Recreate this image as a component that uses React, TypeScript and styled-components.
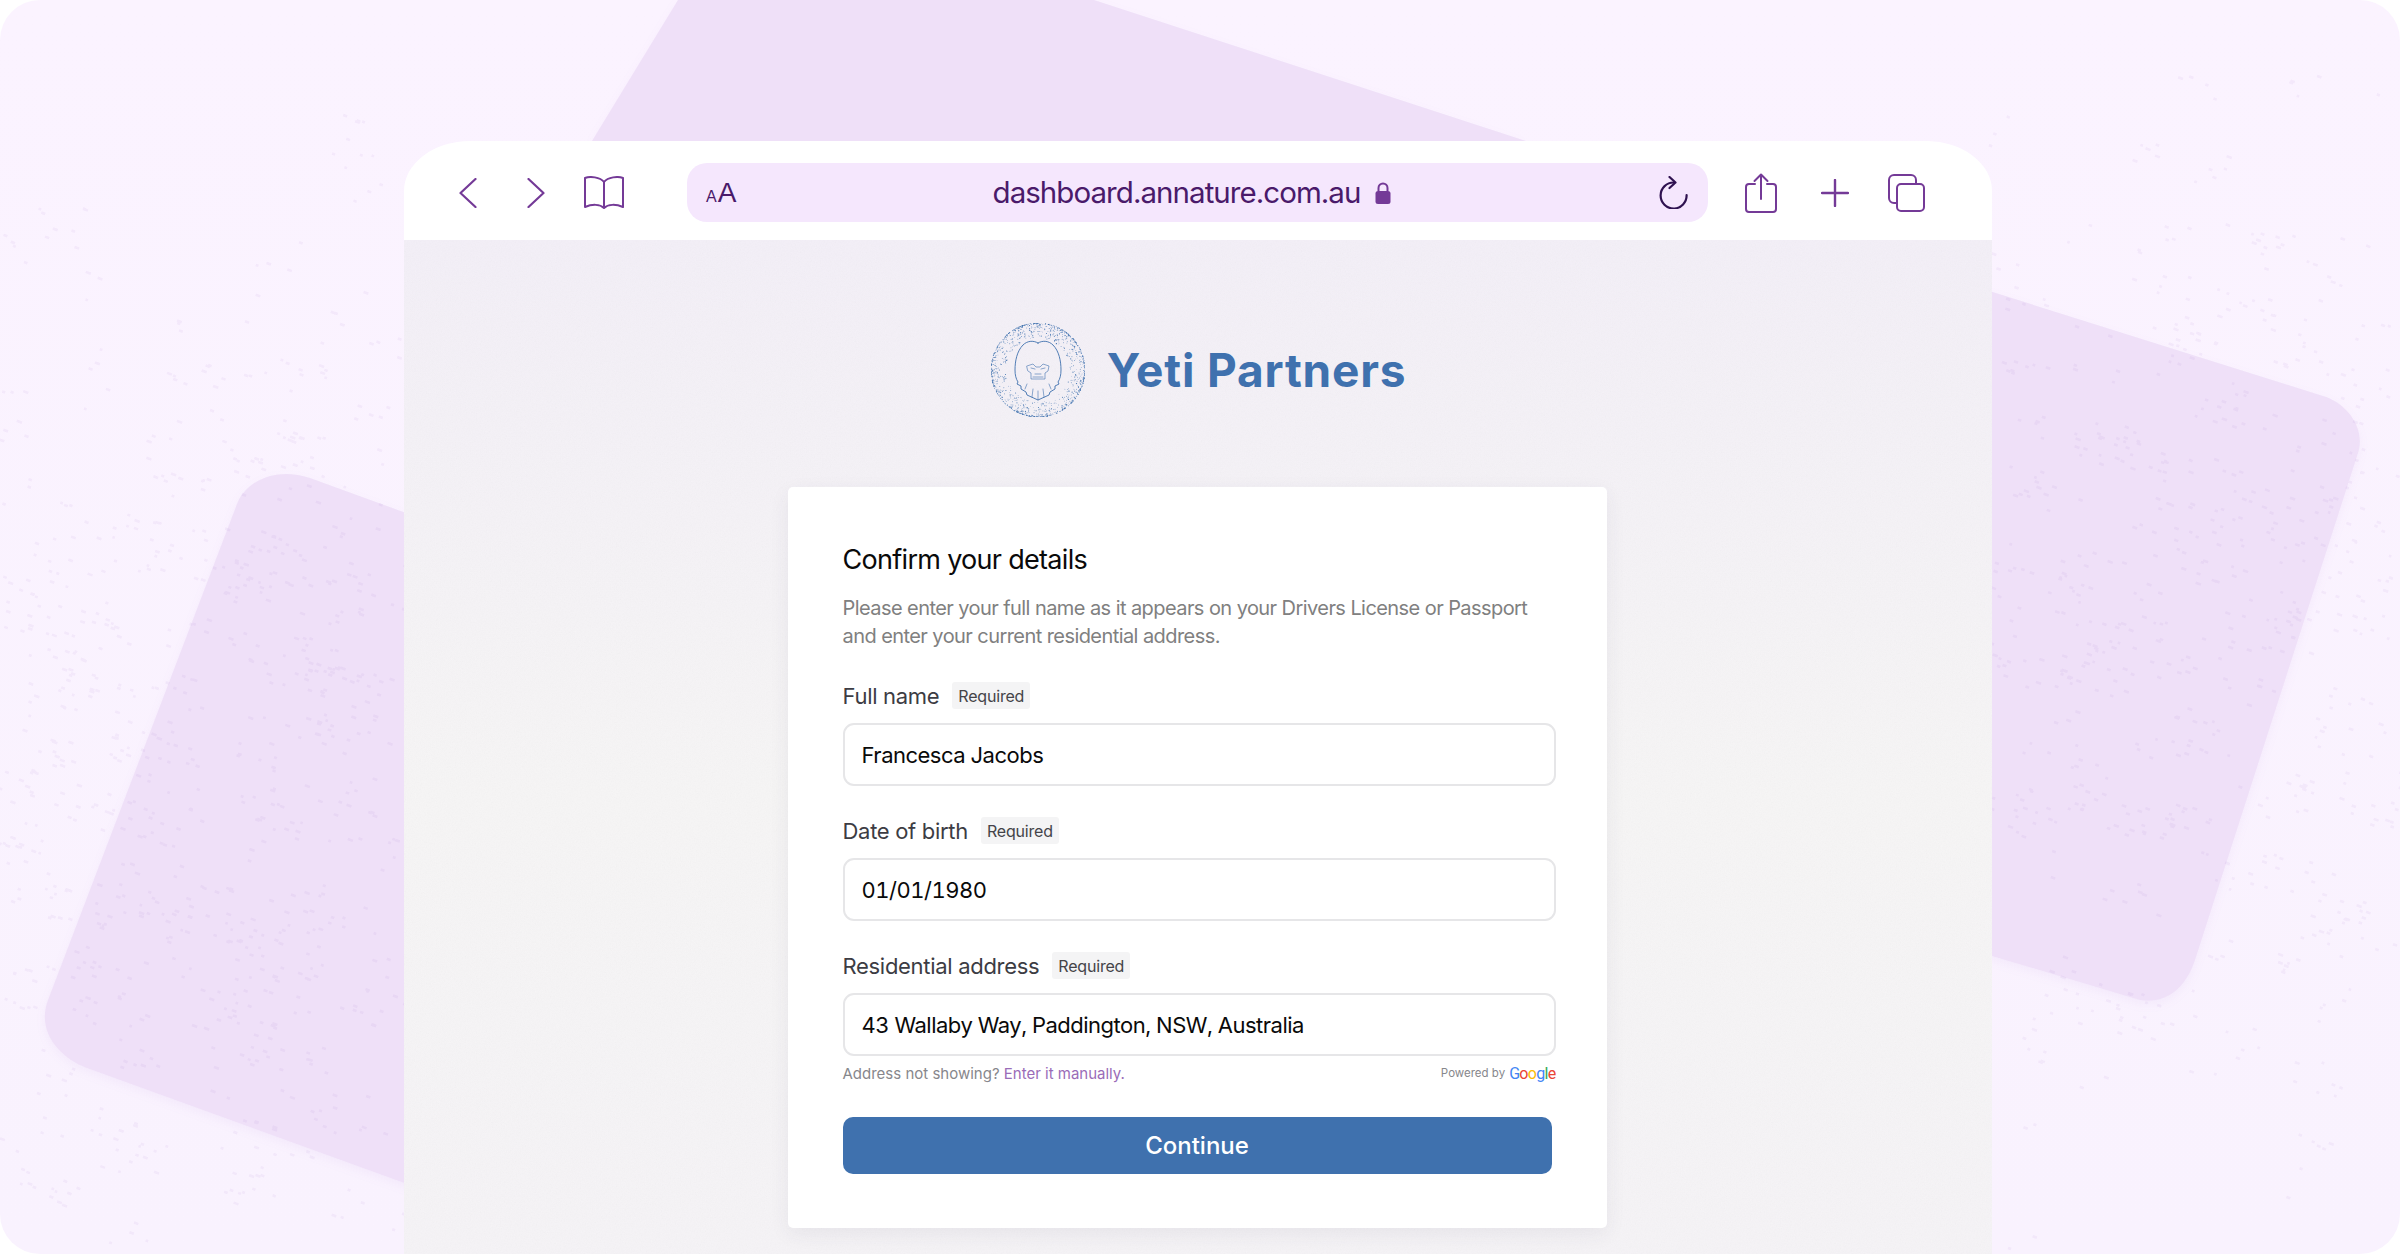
import * as React from 'react';
import styled, { createGlobalStyle } from 'styled-components';

const GlobalStyle = createGlobalStyle`
  html, body {
    margin: 0;
    padding: 0;
    background: #ffffff;
    font-family: "Inter", "Liberation Sans", sans-serif;
  }
  * {
    box-sizing: border-box;
  }
`;

const Page = styled.div`
  position: relative;
  width: 2400px;
  height: 1254px;
  overflow: hidden;
  border-radius: 40px;
  background: linear-gradient(180deg, #fbf3ff 0%, #f9f2fe 100%);
  display: flex;
  flex-direction: column;
  align-items: flex-start;
  padding: 141px 0 0 404px;
`;

const Backdrop = styled.svg`
  position: absolute;
  inset: 0;
`;

const Browser = styled.div`
  position: relative;
  width: 1588px;
  flex: 1;
  display: flex;
  flex-direction: column;
  min-height: 0;
`;

const Toolbar = styled.div`
  height: 99px;
  flex: none;
  padding-top: 4px;
  background: #ffffff;
  border-radius: 66px 66px 0 0 / 50px 50px 0 0;
  display: flex;
  align-items: center;
`;

const IconSlot = styled.div<{ $left: number }>`
  margin-left: ${(p) => p.$left}px;
  display: flex;
  flex: none;
  color: #743a97;
`;

const AddressBar = styled.div`
  margin-left: 63px;
  width: 1021px;
  height: 59px;
  flex: none;
  border-radius: 20px;
  background: #f5e7fd;
  color: #4a1a6a;
  padding: 0 20px 0 19px;
  display: grid;
  grid-template-columns: 1fr auto 1fr;
  align-items: center;
`;

const TextSize = styled.div`
  display: flex;
  align-items: baseline;
  font-family: "Liberation Sans", sans-serif;
  line-height: 1;
  span:first-child {
    font-size: 16px;
    margin-right: 1px;
  }
  span:last-child {
    font-size: 28px;
  }
`;

const Url = styled.div`
  display: flex;
  align-items: center;
  gap: 15px;
  margin-right: 10px;
  font-size: 29.5px;
  letter-spacing: -0.95px;
  line-height: 1;
`;

const Reload = styled.div`
  display: flex;
  justify-content: flex-end;
  color: #2f1250;
`;

const Panel = styled.div`
  position: relative;
  flex: 1;
  min-height: 0;
  overflow: hidden;
  background: linear-gradient(180deg, #f3eff7 0%, #f6f5f5 55%, #f5f3f6 100%);
  display: flex;
  flex-direction: column;
  align-items: center;
  padding: 83px 2px 0 0;
`;

const Noise = styled.svg`
  position: absolute;
  inset: 0;
  opacity: 0.05;
`;

const Brand = styled.div`
  position: relative;
  display: flex;
  align-items: center;
  gap: 22px;
  flex: none;
  margin-left: 3px;
`;

const BrandName = styled.div`
  font-family: "Inter", sans-serif;
  font-weight: 700;
  font-size: 46px;
  letter-spacing: 0.8px;
  line-height: 1;
  color: #3f71ae;
`;

const Card = styled.div`
  position: relative;
  flex: none;
  width: 819px;
  height: 741px;
  margin-top: 70px;
  padding: 55px;
  background: #ffffff;
  border-radius: 5px;
  box-shadow: 0 6px 20px rgba(60, 50, 80, 0.07);
  display: flex;
  flex-direction: column;
`;

const Title = styled.div`
  font-size: 27px;
  line-height: 36px;
  letter-spacing: -0.7px;
  color: #0a0a0a;
`;

const Description = styled.div`
  margin: 16px 0 1px;
  font-size: 20px;
  line-height: 28px;
  letter-spacing: -0.57px;
  white-space: nowrap;
  color: #808080;
`;

const Field = styled.div`
  margin-top: 31px;
`;

const LabelRow = styled.div`
  display: flex;
  align-items: center;
  gap: 13px;
  height: 27px;
`;

const Label = styled.div`
  font-size: 22px;
  letter-spacing: -0.3px;
  color: #3c3c43;
`;

const Badge = styled.div`
  height: 27px;
  padding: 0 6px;
  display: flex;
  align-items: center;
  border-radius: 3px;
  background: #f4f4f5;
  font-size: 16px;
  letter-spacing: -0.2px;
  color: #444449;
`;

const InputBox = styled.div`
  margin-top: 14px;
  width: calc(100% + 4px);
  height: 63px;
  padding: 0 17px;
  display: flex;
  align-items: center;
  border: 2px solid #e6e6e8;
  border-radius: 11px;
  background: #ffffff;
  font-size: 22px;
  letter-spacing: -0.5px;
  font-feature-settings: 'tnum';
  color: #0a0a0a;
`;

const HintRow = styled.div`
  margin-top: 6px;
  width: calc(100% + 4px);
  display: flex;
  justify-content: space-between;
  align-items: center;
  height: 22px;
  flex: none;
`;

const Hint = styled.div`
  font-size: 15px;
  color: #87878c;
  a {
    color: #9a6cb8;
    text-decoration: none;
  }
`;

const Powered = styled.div`
  display: flex;
  align-items: center;
  gap: 4px;
  font-size: 11.5px;
  color: #87878c;
`;

const GoogleMark = styled.span`
  font-family: "Roboto", "Open Sans", sans-serif;
  font-size: 16px;
  letter-spacing: -0.7px;
`;

const Letter = styled.span<{ $color: string }>`
  color: ${(p) => p.$color};
`;

const ContinueButton = styled.button`
  margin-top: 33px;
  height: 57px;
  flex: none;
  border: none;
  border-radius: 10px;
  background: #3f71ae;
  color: #ffffff;
  font-family: "Inter", sans-serif;
  font-size: 24px;
  font-weight: 500;
`;

const seeded = (seed: number) => {
  let s = seed;
  return () => {
    s = (s * 16807) % 2147483647;
    return (s - 1) / 2147483646;
  };
};

const speckles = (() => {
  const rand = seeded(4711);
  const out: { x: number; y: number; w: number }[] = [];
  for (let i = 0; i < 900; i++) {
    const right = rand() > 0.52;
    const cx = right ? 1992 + rand() * 408 : rand() * 404;
    const cy = rand() * 1254;
    // denser around the vertical middle, fades out to the top and bottom
    const centre = right ? 620 : 760;
    if (rand() > Math.exp(-Math.pow((cy - centre) / 360, 2))) continue;
    // little clumps of dots
    const n = 2 + Math.floor(rand() * 4);
    for (let j = 0; j < n; j++) {
      out.push({ x: cx + (rand() - 0.5) * 50, y: cy + (rand() - 0.5) * 34, w: 2.5 + rand() * 3 });
    }
  }
  return out;
})();

const logoDots = (() => {
  const rand = seeded(2024);
  const out: { x: number; y: number; r: number }[] = [];
  for (let i = 0; i < 1200; i++) {
    const a = rand() * Math.PI * 2;
    const d = 47 - Math.pow(rand(), 3) * 15;
    out.push({ x: 47 + Math.cos(a) * d, y: 47 + Math.sin(a) * d, r: 0.25 + rand() * 0.3 });
  }
  return out;
})();

const fields = [
  { label: 'Full name', value: 'Francesca Jacobs' },
  { label: 'Date of birth', value: '01/01/1980' },
  { label: 'Residential address', value: '43 Wallaby Way, Paddington, NSW, Australia' },
];

const LogoMark = () => (
  <svg width="94" height="94" viewBox="0 0 94 94" fill="none">
    <g fill="#3f71ae">
      {logoDots.map((d, i) => (
        <circle key={i} cx={d.x} cy={d.y} r={d.r} />
      ))}
    </g>
    <g stroke="#3f71ae" strokeWidth="0.9" strokeLinejoin="round" strokeLinecap="round">
      <path d="M47 20C42 17 36 18 32 22C26 28 24 38 24 47C24 52 25 56 27 59L26 61L30 63L30 66L35 69L36 72L47 77L58 72L59 69L64 66L64 63L68 61L67 59C69 56 70 52 70 47C70 38 68 28 62 22C58 18 52 17 47 20Z" />
      <path strokeWidth="0.6" d="M36 43L42 41L45 44H49L52 41L58 43L57 48L54 50V56H40V50L37 48Z" />
      <path strokeWidth="0.6" d="M40 45L44 46M54 45L50 46M44 51H50M42 54H52" />
      <path strokeWidth="0.6" d="M47 77V68M41 74L42 66M53 74L52 66M34 66L36 61M60 66L58 61" />
    </g>
  </svg>
);

const BackIcon = () => (
  <svg width="18" height="30" viewBox="0 0 18 30" fill="none" stroke="currentColor" strokeWidth="2.2" strokeLinecap="round" strokeLinejoin="round">
    <path d="M16.5 1L1.5 15L16.5 29" />
  </svg>
);

const ForwardIcon = () => (
  <svg width="18" height="30" viewBox="0 0 18 30" fill="none" stroke="currentColor" strokeWidth="2.2" strokeLinecap="round" strokeLinejoin="round">
    <path d="M1.5 1L16.5 15L1.5 29" />
  </svg>
);

const BookIcon = () => (
  <svg width="40" height="33" viewBox="0 0 40 33" fill="none" stroke="currentColor" strokeWidth="2" strokeLinejoin="round">
    <path d="M20 6C16 1 6 0 1 2V31C8 28 16 28 20 32C24 28 32 28 39 31V2C34 0 24 1 20 6Z" />
    <path d="M20 6V32" />
  </svg>
);

const LockIcon = () => (
  <svg width="16" height="22" viewBox="0 0 16 22" fill="none">
    <rect x="0.5" y="9" width="15" height="13" rx="2.5" fill="#743a97" />
    <path d="M3.5 9V6A4.5 4.5 0 0 1 12.5 6V9" stroke="#743a97" strokeWidth="2" />
  </svg>
);

const ReloadIcon = () => (
  <svg width="29" height="33" viewBox="0 0 29 33" fill="none" stroke="currentColor" strokeWidth="2.2" strokeLinecap="round" strokeLinejoin="round">
    <path d="M15 6.5A13 13 0 1 0 27.6 19" />
    <path d="M10.5 1L16.5 6.5L10.5 12" />
  </svg>
);

const ShareIcon = () => (
  <svg width="32" height="40" viewBox="0 0 32 40" fill="none" stroke="currentColor" strokeWidth="2" strokeLinecap="round" strokeLinejoin="round">
    <path d="M10 11H4A3 3 0 0 0 1 14V36A3 3 0 0 0 4 39H28A3 3 0 0 0 31 36V14A3 3 0 0 0 28 11H22" />
    <path d="M16 1.5V26M9.5 8L16 1.5L22.5 8" />
  </svg>
);

const PlusIcon = () => (
  <svg width="28" height="28" viewBox="0 0 28 28" fill="none" stroke="currentColor" strokeWidth="2.4" strokeLinecap="round">
    <path d="M14 1V27M1 14H27" />
  </svg>
);

const TabsIcon = () => (
  <svg width="37" height="38" viewBox="0 0 37 38" fill="none" stroke="currentColor" strokeWidth="2" strokeLinejoin="round">
    <rect x="9" y="10" width="27" height="27" rx="4" />
    <path d="M9 29H6A5 5 0 0 1 1 24V6A5 5 0 0 1 6 1H23A5 5 0 0 1 28 6V10" />
  </svg>
);

const App: React.FC = () => {
  return (
    <Page>
      <GlobalStyle />
      <Backdrop width="2400" height="1254" viewBox="0 0 2400 1254">
        <g fill="#efe0f8" style={{ filter: 'drop-shadow(0 4px 5px rgba(140, 80, 190, 0.05))' }}>
          <path d="M592 141L678 0H1094L1526 141Z" />
          <path d="M237 504C245 482 275 466 310 478L700 620V1290L87 1068C60 1058 36 1032 48 1000Z" />
          <path d="M1700 200L2323 396C2345 402 2368 428 2357 456L2195 960C2185 990 2165 1004 2140 1000L1700 869Z" />
        </g>
        <g fill="#8c50be" opacity="0.06">
          {speckles.map((s, i) => (
            <rect key={i} x={s.x} y={s.y} width={s.w} height="2.6" transform={`rotate(20 ${s.x} ${s.y})`} />
          ))}
        </g>
      </Backdrop>
      <Browser>
        <Toolbar>
          <IconSlot $left={55}><BackIcon /></IconSlot>
          <IconSlot $left={50}><ForwardIcon /></IconSlot>
          <IconSlot $left={39}><BookIcon /></IconSlot>
          <AddressBar>
            <TextSize>
              <span>A</span>
              <span>A</span>
            </TextSize>
            <Url>
              dashboard.annature.com.au
              <LockIcon />
            </Url>
            <Reload><ReloadIcon /></Reload>
          </AddressBar>
          <IconSlot $left={37}><ShareIcon /></IconSlot>
          <IconSlot $left={44}><PlusIcon /></IconSlot>
          <IconSlot $left={39}><TabsIcon /></IconSlot>
        </Toolbar>
        <Panel>
          <Noise width="100%" height="100%">
            <filter id="grain">
              <feTurbulence type="fractalNoise" baseFrequency="0.8" numOctaves="2" stitchTiles="stitch" />
              <feColorMatrix type="saturate" values="0" />
            </filter>
            <rect width="100%" height="100%" filter="url(#grain)" />
          </Noise>
          <Brand>
            <LogoMark />
            <BrandName>Yeti Partners</BrandName>
          </Brand>
          <Card>
            <Title>Confirm your details</Title>
            <Description>
              Please enter your full name as it appears on your Drivers License or Passport
              <br />
              and enter your current residential address.
            </Description>
            {fields.map((f) => (
              <Field key={f.label}>
                <LabelRow>
                  <Label>{f.label}</Label>
                  <Badge>Required</Badge>
                </LabelRow>
                <InputBox>{f.value}</InputBox>
              </Field>
            ))}
            <HintRow>
              <Hint>
                Address not showing? <a href="#">Enter it manually.</a>
              </Hint>
              <Powered>
                Powered by
                <GoogleMark>
                  <Letter $color="#4285f4">G</Letter>
                  <Letter $color="#ea4335">o</Letter>
                  <Letter $color="#fbbc05">o</Letter>
                  <Letter $color="#4285f4">g</Letter>
                  <Letter $color="#34a853">l</Letter>
                  <Letter $color="#ea4335">e</Letter>
                </GoogleMark>
              </Powered>
            </HintRow>
            <ContinueButton>Continue</ContinueButton>
          </Card>
        </Panel>
      </Browser>
    </Page>
  );
};

export default App;
